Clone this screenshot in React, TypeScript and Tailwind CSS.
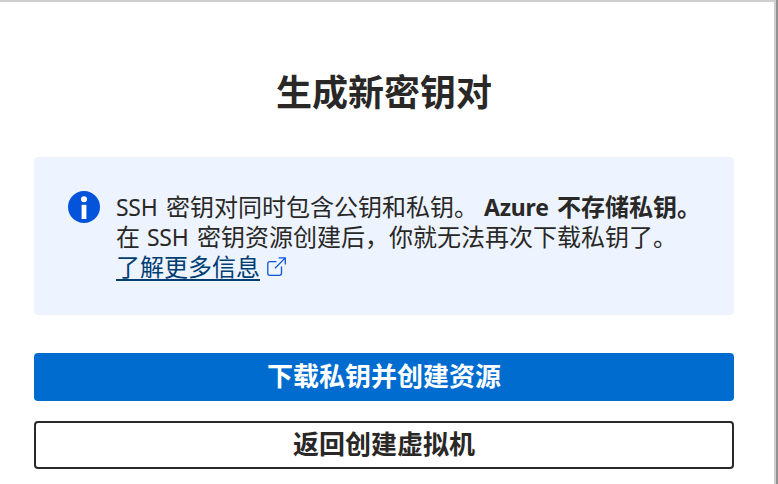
function InfoIcon() {
  return (
    <svg className="mt-[34px] size-8 shrink-0" viewBox="0 0 32 32">
      <circle cx="16" cy="16" r="16" fill="#0453db" />
      <circle cx="16" cy="8.2" r="3" fill="#fff" />
      <rect x="13.6" y="13.8" width="4.8" height="14.2" fill="#fff" />
    </svg>
  );
}

function ExternalLinkIcon() {
  return (
    <svg className="ml-[7px] inline-block h-5 w-5 align-[-1px]" viewBox="0 0 20 20" fill="none" stroke="#0f55dc" strokeWidth="1.3">
      <path d="M9.5 4.6H2.9Q.8 4.6.8 6.7V16.2Q.8 18.3 2.9 18.3H12.4Q14.5 18.3 14.5 16.2V9.6" />
      <path d="M8 11.2 18.3.9M11.6.9H18.3V7.6" />
    </svg>
  );
}

export default function App() {
  return (
    <div className="flex h-[484px] w-[778px] overflow-hidden bg-white font-['Noto_Sans','Noto_Sans_CJK_SC',sans-serif] text-[#292827]">
      <main className="flex w-[776px] flex-col border-t-2 border-r-2 border-[#cfcfcf] pr-10 pl-[34px]">
        <h1 className="mt-[62px] h-[93px] text-center text-[36px] leading-[52px] font-bold font-['Noto_Sans_CJK_SC',sans-serif]">生成新密钥对</h1>
        <section className="flex h-[158px] shrink-0 rounded bg-[#edf4ff] pl-[34px]">
          <InfoIcon />
          <div className="mt-[35px] ml-4 text-[24px] leading-[30px] whitespace-nowrap">
            <p className="h-[30px]">
              <span className="inline-block w-[50px] text-[23px] tracking-[-0.3px]">SSH</span>
              密钥对同时包含公钥和私钥。
              <strong className="ml-[6px] font-bold">
                <span className="inline-block w-[73px] text-[23px] tracking-[-0.2px]">Azure</span>
                不存储私钥。
              </strong>
            </p>
            <p className="h-[30px]">
              在<span className="ml-[7px] inline-block w-[50px] text-[23px] tracking-[-0.3px]">SSH</span>
              密钥资源创建后，你就无法再次下载私钥了。
            </p>
            <p className="h-[30px]">
              <a className="text-[#003d73] underline decoration-2 underline-offset-[3px]">了解更多信息</a>
              <ExternalLinkIcon />
            </p>
          </div>
        </section>
        <button className="mt-[38px] h-12 shrink-0 rounded bg-[#006cd0] pb-0.5 text-[26px] leading-[46px] font-bold text-white">下载私钥并创建资源</button>
        <button className="mt-5 h-12 shrink-0 rounded border-2 border-[#292929] pb-0.5 text-[26px] leading-[42px] font-bold">返回创建虚拟机</button>
      </main>
      <div className="w-0.5 bg-[#929292]" />
    </div>
  );
}
